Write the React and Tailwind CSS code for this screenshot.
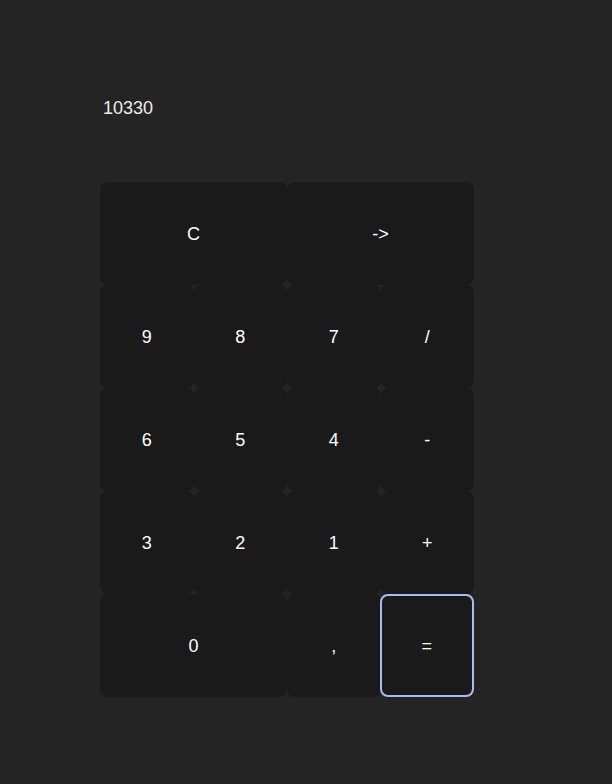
import React, { useState } from 'react';

const keys = [
  { label: 'C', span: 2 },
  { label: '->', span: 2 },
  { label: '9' }, { label: '8' }, { label: '7' }, { label: '/' },
  { label: '6' }, { label: '5' }, { label: '4' }, { label: '-' },
  { label: '3' }, { label: '2' }, { label: '1' }, { label: '+' },
  { label: '0', span: 2 },
  { label: ',' },
  { label: '=' },
];

export default function App() {
  const [value] = useState('10330');
  const [active] = useState('=');

  return (
    <div className="w-full h-[784px] bg-[#242424] text-[#ececec] font-['Liberation_Sans',Arial,sans-serif]">
      <div className="pl-[100px] pt-[95px]">
        {/* Display */}
        <div className="pl-[3px] h-[87px] text-[18px] leading-[27px]">{value}</div>

        {/* Keypad */}
        <div className="grid grid-cols-4 w-[374px]">
          {keys.map((k) => (
            <button
              key={k.label}
              className={
                'h-[103px] pt-[2px] rounded-lg bg-[#1a1a1a] text-[18px] text-white border-2 ' +
                (k.span === 2 ? 'col-span-2 ' : '') +
                (active === k.label ? 'border-[#a9bdf2] -ml-px' : 'border-transparent')
              }
            >
              {k.label}
            </button>
          ))}
        </div>
      </div>
    </div>
  );
}
